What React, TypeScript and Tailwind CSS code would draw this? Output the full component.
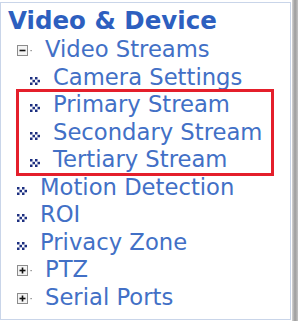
const font = { fontFamily: '"DejaVu Sans", Verdana, sans-serif' };

function Bullet() {
  return (
    <svg width="11" height="8" viewBox="0 0 11 8" className="shrink-0">
      <g fill="#1c2f80">
        <rect x="0" y="0" width="2.5" height="2.5" />
        <rect x="5" y="0" width="2.5" height="2.5" />
        <rect x="2.5" y="2.8" width="2.5" height="2.5" />
        <rect x="7.5" y="2.8" width="2.5" height="2.5" />
        <rect x="0" y="5.5" width="2.5" height="2.5" />
        <rect x="5" y="5.5" width="2.5" height="2.5" />
      </g>
    </svg>
  );
}

function Toggle({ open }: { open: boolean }) {
  return (
    <svg width="16" height="11" viewBox="0 0 16 11" className="shrink-0">
      <rect x="0.5" y="0.5" width="10" height="10" fill="#f4f4f4" stroke="#8c8c8c" />
      <rect x="2.5" y="4.7" width="6" height="1.6" fill="#111" />
      {!open && <rect x="4.7" y="2.5" width="1.6" height="6" fill="#111" />}
      <rect x="13.5" y="5" width="1.2" height="1.2" fill="#777" />
    </svg>
  );
}

function Node({ label, open }: { label: string; open: boolean }) {
  return (
    <div className="flex items-start pl-[16px]">
      <div className="mt-[9px]">
        <Toggle open={open} />
      </div>
      <span className="ml-[12px] whitespace-nowrap">{label}</span>
    </div>
  );
}

function Leaf({ label, indent }: { label: string; indent: boolean }) {
  return (
    <div className={indent ? "flex items-start pl-[29px]" : "flex items-start pl-[16px]"}>
      <div className="mt-[13px]">
        <Bullet />
      </div>
      <span className="ml-[12px] whitespace-nowrap">{label}</span>
    </div>
  );
}

export default function App() {
  return (
    <div className="flex w-[298px] h-[321px] bg-white overflow-hidden" style={font}>
      <div className="mt-[2px] w-[291px] h-[318px] border border-[#c9d5e9] bg-white pl-[7px] pt-[2px]">
        <div className="text-[24.5px] leading-[31px] font-bold text-[#2d5fbf] whitespace-nowrap">
          Video &amp; Device
        </div>
        <div className="text-[22.7px] leading-[27.5px] text-[#4270c6] -ml-[7px]">
          <Node label="Video Streams" open={true} />
          <Leaf label="Camera Settings" indent={true} />
          <div className="relative">
            <div className="absolute -top-[2px] -bottom-[2px] left-[15px] w-[258px] border-[3px] border-[#e41f2b]" />
            <Leaf label="Primary Stream" indent={true} />
            <Leaf label="Secondary Stream" indent={true} />
            <Leaf label="Tertiary Stream" indent={true} />
          </div>
          <Leaf label="Motion Detection" indent={false} />
          <Leaf label="ROI" indent={false} />
          <Leaf label="Privacy Zone" indent={false} />
          <Node label="PTZ" open={false} />
          <Node label="Serial Ports" open={false} />
        </div>
      </div>
      <div className="ml-[1px] w-[6px] h-[321px] bg-gradient-to-r from-[#d4d4d4] via-[#9c9c9c] to-[#c4c4c4]" />
    </div>
  );
}
